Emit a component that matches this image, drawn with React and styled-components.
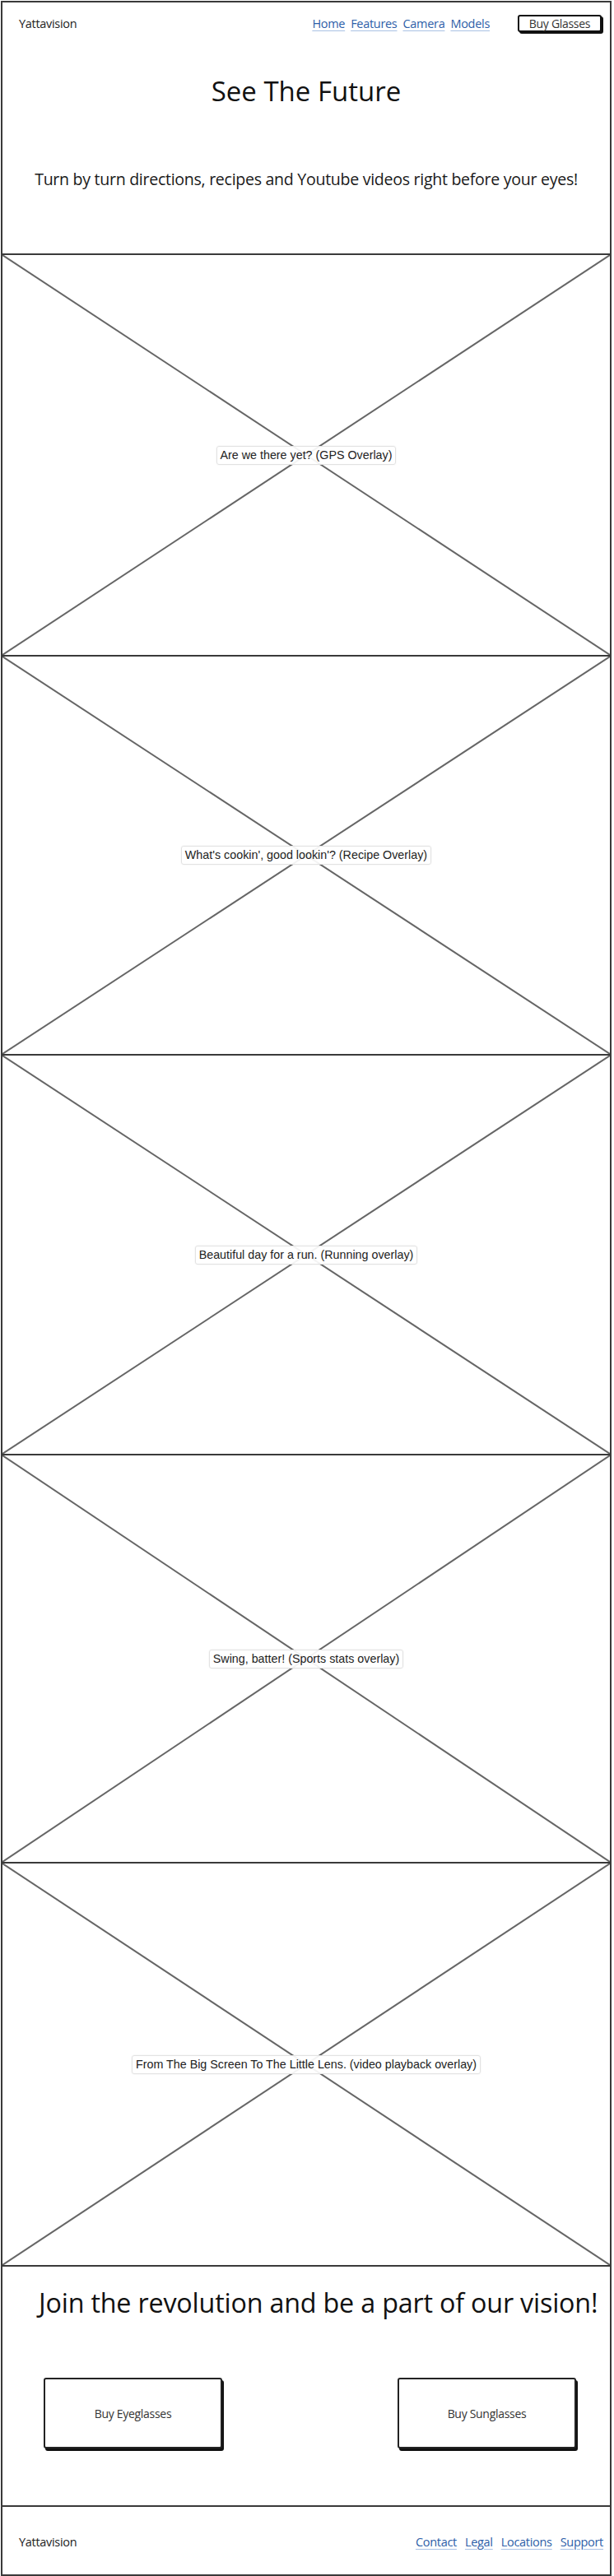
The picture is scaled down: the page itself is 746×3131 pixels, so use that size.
import styled, { createGlobalStyle } from "styled-components";

const GlobalStyle = createGlobalStyle`
    html, body {
        margin: 0;
        padding: 0;
        background: #fff;
    }
    body {
        font-family: "Open Sans", "Liberation Sans", sans-serif;
        color: #1a1a1a;
    }
`;

const NavLinks = ["Home", "Features", "Camera", "Models"];
const FooterLinks = ["Contact", "Legal", "Locations", "Support"];

const Overlays = [
    { id: 1, label: "Are we there yet? (GPS Overlay)", height: 488 },
    { id: 2, label: "What's cookin', good lookin'? (Recipe Overlay)", height: 485 },
    { id: 3, label: "Beautiful day for a run. (Running overlay)", height: 486 },
    { id: 4, label: "Swing, batter! (Sports stats overlay)", height: 496 },
    { id: 5, label: "From The Big Screen To The Little Lens. (video playback overlay)", height: 490 },
];

const Page = styled.div`
    padding: 1px 0 4px 1px;
`;

const Frame = styled.div`
    width: 742px;
    box-sizing: border-box;
    border: 2px solid #3a3a3a;
    display: flex;
    flex-direction: column;
`;

const Hero = styled.header`
    height: 305px;
    border-bottom: 2px solid #3a3a3a;
    display: flex;
    flex-direction: column;
    align-items: center;
`;

const TopBar = styled.nav`
    align-self: stretch;
    display: flex;
    align-items: center;
    padding: 14px 10px 0 20px;
    height: 23px;
`;

const Brand = styled.span`
    font-size: 14.5px;
    color: #222;
    letter-spacing: -0.3px;
`;

const LinkRow = styled.div`
    margin-left: auto;
    display: flex;
    gap: ${p => p.$gap}px;
`;

const Link = styled.a`
    font-size: 14.5px;
    color: #2d5ea8;
    text-decoration: underline;
    text-decoration-color: #a9c1e4;
    text-underline-offset: 3px;
    letter-spacing: -0.3px;
`;

const SmallButton = styled.button`
    margin-left: 34px;
    width: 102px;
    height: 21px;
    padding: 0;
    border: 2px solid #111;
    border-radius: 3px;
    background: #fff;
    box-shadow: 2px 2px 0 #111;
    font-family: inherit;
    font-size: 14px;
    line-height: 16px;
    color: #333;
    letter-spacing: -0.3px;
`;

const Headline = styled.h1`
    margin: 50px 0 0;
    font-weight: 400;
    font-size: 33px;
    line-height: 42px;
    color: #111;
`;

const Lead = styled.p`
    margin: 73px 0 0;
    font-size: 19.6px;
    line-height: 26px;
    color: #1a1a1a;
    letter-spacing: -0.3px;
`;

const Placeholder = styled.section`
    position: relative;
    box-sizing: border-box;
    height: ${p => p.$h}px;
    border-bottom: 2px solid #3a3a3a;
    display: flex;
    align-items: center;
    justify-content: center;
`;

const Cross = styled.svg`
    position: absolute;
    inset: 0;
    width: 100%;
    height: 100%;
`;

const Caption = styled.span`
    position: relative;
    font-family: "Liberation Sans", Arial, sans-serif;
    font-size: 14.3px;
    line-height: 17px;
    color: #222;
    background: rgba(255, 255, 255, 0.92);
    border: 1px solid #e2e2e2;
    border-radius: 3px;
    padding: 2px 4px;
    box-shadow: 0 0 2px rgba(0, 0, 0, 0.08);
`;

const Cta = styled.section`
    height: 290px;
    border-bottom: 2px solid #3a3a3a;
    display: flex;
    flex-direction: column;
`;

const CtaTitle = styled.h2`
    margin: 23px 0 0 44px;
    font-weight: 400;
    font-size: 32.3px;
    line-height: 40px;
    color: #111;
    letter-spacing: -0.2px;
`;

const CtaRow = styled.div`
    display: flex;
    justify-content: space-between;
    padding: 0 41px 0 50px;
    margin-top: 72px;
`;

const BigButton = styled.button`
    width: 217px;
    height: 86px;
    box-sizing: border-box;
    border: 2px solid #222;
    border-radius: 3px;
    background: #fff;
    box-shadow: 2px 3px 0 #111;
    font-family: inherit;
    font-size: 14px;
    color: #333;
    letter-spacing: -0.3px;
`;

const Footer = styled.footer`
    height: 80px;
    display: flex;
    align-items: center;
    padding: 2px 8px 0 20px;
`;

function Overlay({ label, height }) {
    return (
        <Placeholder $h={height}>
            <Cross viewBox="0 0 100 100" preserveAspectRatio="none">
                <line x1="0" y1="0" x2="100" y2="100" stroke="#666" strokeWidth="2" vectorEffect="non-scaling-stroke" />
                <line x1="100" y1="0" x2="0" y2="100" stroke="#666" strokeWidth="2" vectorEffect="non-scaling-stroke" />
            </Cross>
            <Caption>{label}</Caption>
        </Placeholder>
    );
}

export default function App() {
    return (
        <>
            <GlobalStyle />
            <Page>
                <Frame>
                    <Hero>
                        <TopBar>
                            <Brand>Yattavision</Brand>
                            <LinkRow $gap={7}>
                                {NavLinks.map(l => (
                                    <Link key={l}>{l}</Link>
                                ))}
                            </LinkRow>
                            <SmallButton>Buy Glasses</SmallButton>
                        </TopBar>
                        <Headline>See The Future</Headline>
                        <Lead>Turn by turn directions, recipes and Youtube videos right before your eyes!</Lead>
                    </Hero>
                    {Overlays.map(o => (
                        <Overlay key={o.id} label={o.label} height={o.height} />
                    ))}
                    <Cta>
                        <CtaTitle>Join the revolution and be a part of our vision!</CtaTitle>
                        <CtaRow>
                            <BigButton>Buy Eyeglasses</BigButton>
                            <BigButton>Buy Sunglasses</BigButton>
                        </CtaRow>
                    </Cta>
                    <Footer>
                        <Brand>Yattavision</Brand>
                        <LinkRow $gap={10}>
                            {FooterLinks.map(l => (
                                <Link key={l}>{l}</Link>
                            ))}
                        </LinkRow>
                    </Footer>
                </Frame>
            </Page>
        </>
    );
}
